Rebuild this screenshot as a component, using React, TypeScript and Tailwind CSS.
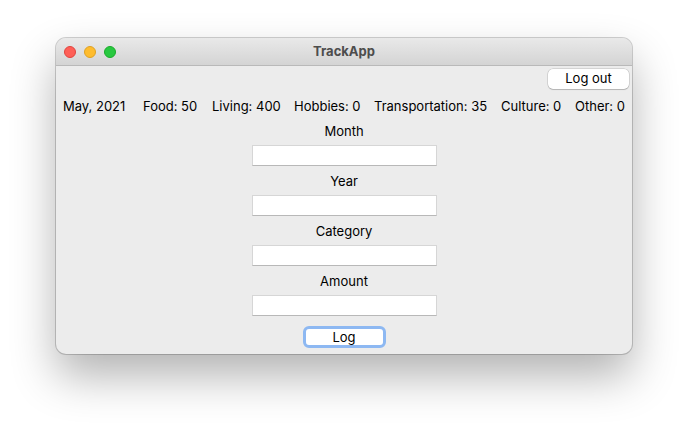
import React from 'react';

const STATS = [
  'May, 2021',
  'Food: 50',
  'Living: 400',
  'Hobbies: 0',
  'Transportation: 35',
  'Culture: 0',
  'Other: 0',
];

const FIELDS = ['Month', 'Year', 'Category', 'Amount'];

const TrafficLights = () => (
  <div className="absolute left-[8px] top-[8px] flex gap-[8px]">
    <span className="w-[12px] h-[12px] rounded-full bg-[#fe5f57] border border-[#e0443e]" />
    <span className="w-[12px] h-[12px] rounded-full bg-[#febc2e] border border-[#dea123]" />
    <span className="w-[12px] h-[12px] rounded-full bg-[#28c840] border border-[#1aab29]" />
  </div>
);

const Field = ({ label }: { label: string }) => (
  <>
    <div className="mt-[7px] h-[16px] leading-[16px] text-[13px] text-black">{label}</div>
    <div className="mt-[6px] w-[185px] h-[21px] bg-white border border-[#d6d6d6] border-b-[#b8b8b8]" />
  </>
);

export default function App() {
  return (
    <div
      className="w-[688px] h-[428px] bg-white pt-[38px] pl-[56px]"
      style={{ fontFamily: 'Inter, "Liberation Sans", Arial, sans-serif' }}
    >
      <div className="w-[576px] h-[316px] rounded-[10px] overflow-hidden bg-[#ececec] shadow-[0_22px_45px_rgba(0,0,0,0.3),0_0_0_1px_rgba(0,0,0,0.18)] flex flex-col">
        {/* title bar */}
        <div className="relative h-[28px] shrink-0 bg-gradient-to-b from-[#e9e9e9] to-[#d4d4d4] border-b border-[#b9b9b9] flex items-center justify-center">
          <TrafficLights />
          <span className="text-[13px] font-bold text-[#4d4d4d]">TrackApp</span>
        </div>

        {/* log out */}
        <div className="flex justify-end pr-[3px] pt-[3px]">
          <button className="w-[81px] h-[20px] rounded-[5px] bg-white text-[13px] text-black shadow-[0_0_0_0.5px_rgba(0,0,0,0.2),0_1px_1px_rgba(0,0,0,0.15)]">
            Log out
          </button>
        </div>

        {/* totals */}
        <div className="mt-[9px] h-[16px] leading-[16px] pl-[7px] grid grid-cols-[80px_69px_82px_80px_127px_74px_auto] text-[13px] text-black whitespace-nowrap">
          {STATS.map((s) => (
            <span key={s}>{s}</span>
          ))}
        </div>

        {/* form */}
        <div className="mt-[2px] flex flex-col items-center">
          {FIELDS.map((f) => (
            <Field key={f} label={f} />
          ))}
          <button className="mt-[10px] w-[83px] h-[22px] rounded-[6px] bg-white border-[3px] border-[#8db8f2] text-[13px] leading-[14px] text-black">
            Log
          </button>
        </div>
      </div>
    </div>
  );
}
